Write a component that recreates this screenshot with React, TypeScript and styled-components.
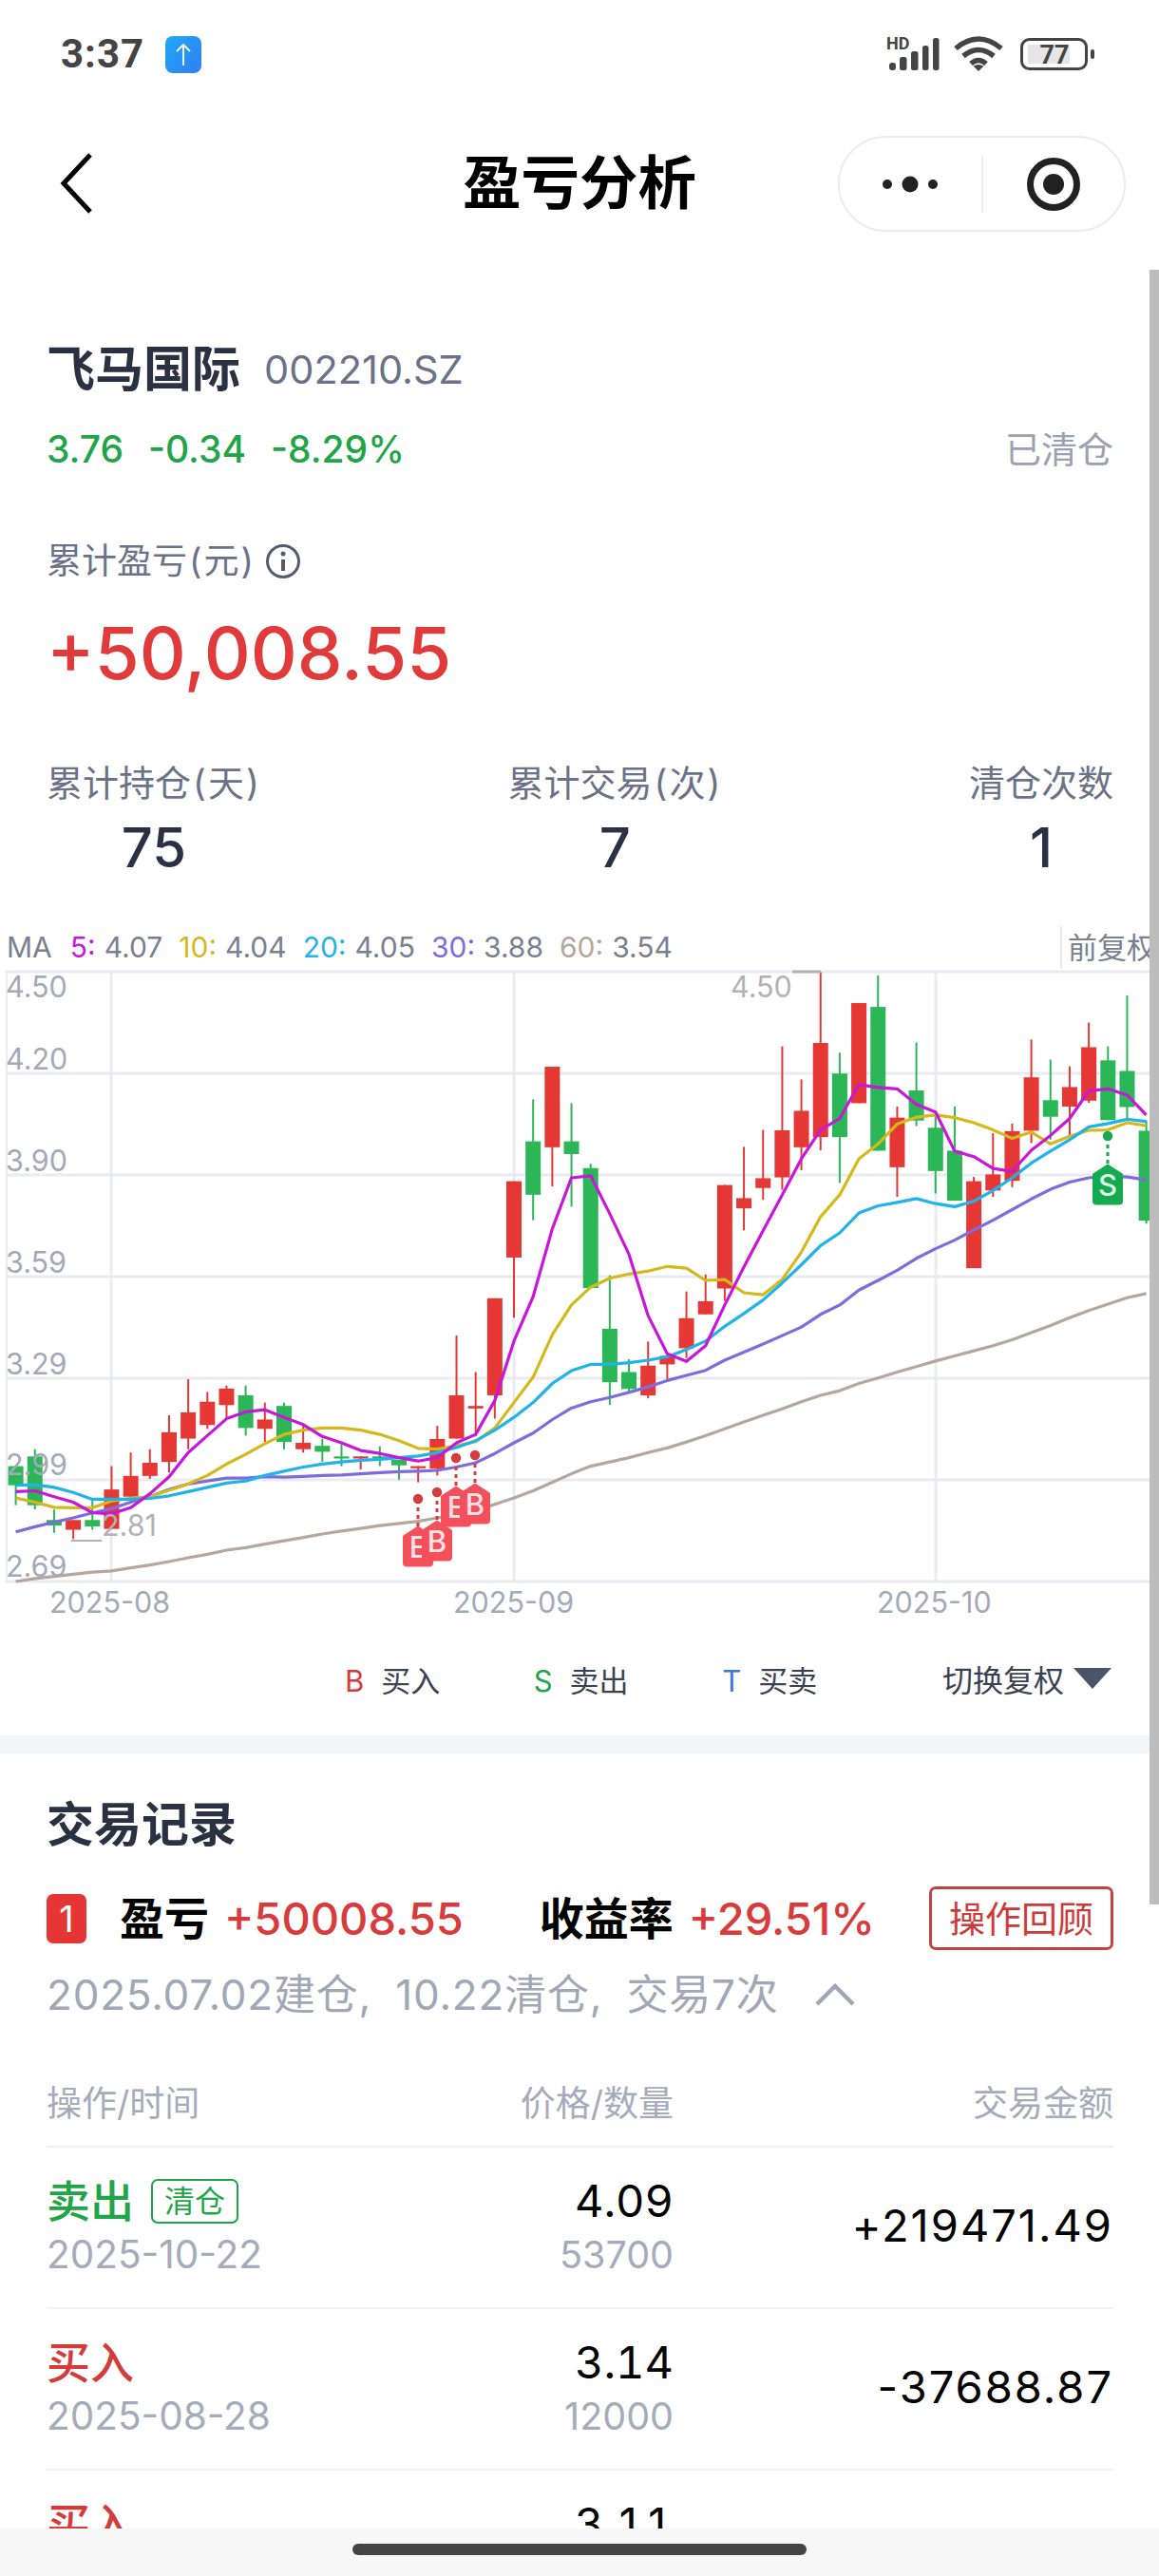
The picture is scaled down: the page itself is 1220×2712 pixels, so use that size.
import React from "react";
import styled, { createGlobalStyle } from "styled-components";

const FONT = 'Inter, "Noto Sans CJK SC", sans-serif';
const INK = "#2a3142";
const SUB = "#6b7287";
const MUTED = "#a3a9b8";
const RED = "#e03a3a";
const GREEN = "#1fa548";

const Global = createGlobalStyle`
  html, body { margin: 0; padding: 0; background: #fff; }
  body { font-family: ${FONT}; }
  * { box-sizing: border-box; }
`;

const Page = styled.div`
  position: relative;
  width: 1220px;
  height: 2712px;
  display: flex;
  flex-direction: column;
  overflow: hidden;
  background: #fff;
`;
const Scroll = styled.main`
  flex: 1;
  min-height: 0;
  overflow: hidden;
`;
const ScrollThumb = styled.div`
  position: absolute;
  right: 0;
  top: 284px;
  width: 10px;
  height: 1721px;
  background: #bcbcbc;
`;
const StatusBar = styled.div`
  height: 114px;
  display: flex;
  align-items: center;
  justify-content: space-between;
  padding: 0 68px 0 64px;
`;
const StatusLeft = styled.div`
  display: flex;
  align-items: center;
  gap: 22px;
`;
const Clock = styled.span`
  font: 700 42px/48px Roboto, sans-serif;
  letter-spacing: 1px;
  color: #444;
`;
const StatusRight = styled.div`
  display: flex;
  align-items: center;
  gap: 12px;
`;
const Nav = styled.header`
  position: relative;
  height: 158px;
  display: flex;
  align-items: center;
  justify-content: center;
`;
const BackIcon = styled.svg`
  position: absolute;
  left: 60px;
  top: 46px;
`;
const NavTitle = styled.h1`
  margin: 0;
  font: 700 61.5px/70px ${FONT};
  color: #000;
`;
const Capsule = styled.div`
  position: absolute;
  left: 882px;
  top: 29px;
  width: 303px;
  height: 101px;
  border: 2px solid #ececec;
  border-radius: 51px;
  display: flex;
  align-items: center;
`;
const CapsuleSide = styled.div`
  flex: 1;
  height: 60px;
  display: flex;
  align-items: center;
  justify-content: center;
`;
const CapsuleDivider = styled.div`
  width: 2px;
  height: 60px;
  background: #efefef;
`;

const Summary = styled.section`
  padding: 87px 48px 0 49px;
`;
const NameRow = styled.div`
  display: flex;
  align-items: center;
  gap: 25px;
  height: 60px;
`;
const StockName = styled.span`
  font: 600 51px/60px ${FONT};
  color: ${INK};
`;
const StockCode = styled.span`
  font: 400 41.5px/60px ${FONT};
  color: ${SUB};
`;
const QuoteRow = styled.div`
  margin-top: 29px;
  height: 50px;
  display: flex;
  align-items: center;
  gap: 26px;
`;
const Quote = styled.span`
  font: 500 39px/50px ${FONT};
  color: ${GREEN};
`;
const ClosedState = styled.span`
  margin-left: auto;
  font: 400 38px/50px ${FONT};
  color: #9aa1b0;
`;
const ProfitLabel = styled.div`
  margin-top: 71px;
  height: 44px;
  display: flex;
  align-items: center;
  gap: 10px;
  font: 400 37px/44px ${FONT};
  color: ${SUB};
`;
const LabelText = styled.span``;
const Paren = styled.span`
  padding: 0 2px;
`;
const ProfitValue = styled.div`
  margin-top: 29px;
  font: 500 76px/90px ${FONT};
  color: ${RED};
`;
const Stats = styled.div`
  margin-top: 67px;
  display: flex;
  justify-content: space-between;
`;
const Stat = styled.div`
  display: flex;
  flex-direction: column;
  align-items: center;
`;
const StatLabel = styled.span`
  font: 400 38px/50px ${FONT};
  color: ${SUB};
`;
const StatValue = styled.span`
  margin-top: 8px;
  font: 500 58px/70px ${FONT};
  color: ${INK};
`;

const MaRow = styled.div`
  margin-top: 48px;
  height: 45px;
  display: flex;
  align-items: center;
  padding-left: 7px;
  font: 400 30px/45px ${FONT};
  color: #79808f;
`;
const MaName = styled.span`
  margin-right: 19px;
`;
const MaItem = styled.span`
  margin-right: 17px;
`;
const MaKey = styled.span<{ $color: string }>`
  color: ${(p) => p.$color};
  margin-right: 9px;
`;
const AdjustTab = styled.div`
  margin-left: auto;
  height: 45px;
  width: 104px;
  padding-left: 6px;
  border-left: 2px solid #e8eaf0;
  font: 400 31px/45px ${FONT};
  white-space: nowrap;
  overflow: hidden;
`;
const ChartSvg = styled.svg`
  display: block;
  width: 1220px;
  height: 690px;
`;
const AxisText = styled.text`
  font: 400 30.5px ${FONT};
  fill: ${MUTED};
`;
const MarkText = styled.text`
  font: 400 30.5px ${FONT};
  fill: #b2b2b2;
`;
const TagText = styled.text`
  font: 500 31px ${FONT};
  text-anchor: middle;
`;

const Legend = styled.div`
  height: 117px;
  padding: 40px 50px 0 363px;
  display: flex;
  align-items: flex-start;
`;
const LegendItem = styled.div`
  width: 199px;
  display: flex;
  align-items: center;
  gap: 18px;
  height: 40px;
  font: 400 31px/40px ${FONT};
  color: #3a4152;
`;
const LegendKey = styled.span<{ $color: string }>`
  color: ${(p) => p.$color};
`;
const AdjustSwitch = styled.div`
  margin-left: 33px;
  display: flex;
  align-items: center;
  gap: 10px;
  height: 40px;
  font: 400 32px/40px ${FONT};
  color: #3a4152;
  white-space: nowrap;
`;
const Caret = styled.span`
  width: 0;
  height: 0;
  margin-bottom: 6px;
  border-left: 20px solid transparent;
  border-right: 20px solid transparent;
  border-top: 22px solid #4a5568;
`;
const Gap = styled.div`
  height: 19px;
  background: #f4f5f9;
`;
const Records = styled.section`
  padding: 45px 48px 0 49px;
`;
const RecordsTitle = styled.h2`
  margin: 0;
  font: 700 50px/60px ${FONT};
  color: ${INK};
`;
const RoundRow = styled.div`
  margin-top: 35px;
  height: 67px;
  display: flex;
  align-items: center;
`;
const RoundBadge = styled.span`
  width: 42px;
  height: 52px;
  margin-right: 35px;
  border-radius: 7px;
  background: #e53535;
  color: #fff;
  font: 400 38px/52px ${FONT};
  text-align: center;
`;
const RoundKey = styled.span<{ $gap?: number }>`
  font: 700 47px/60px ${FONT};
  color: #000;
  margin-left: ${(p) => p.$gap ?? 0}px;
  margin-right: 16px;
`;
const RoundValue = styled.span`
  font: 500 47px/60px ${FONT};
  color: #d83b3b;
`;
const ReviewButton = styled.button`
  margin-left: auto;
  width: 194px;
  height: 67px;
  padding: 0;
  border: 3px solid #c9403f;
  border-radius: 7px;
  background: #fff;
  color: #cc3b3b;
  font: 400 38px/60px ${FONT};
`;
const RoundMeta = styled.div`
  margin-top: 22px;
  height: 50px;
  display: flex;
  align-items: center;
  gap: 38px;
  font: 400 44px/50px ${FONT};
  word-spacing: 12px;
  letter-spacing: 0.8px;
  color: #a0a7b6;
  white-space: nowrap;
`;
const TableGrid = styled.div`
  display: grid;
  grid-template-columns: 342px 318px 1fr;
`;
const TableHead = styled(TableGrid)`
  margin-top: 68px;
  padding-bottom: 22px;
  border-bottom: 2px solid #eeeff2;
  font: 400 37px/44px ${FONT};
  color: #a4abbb;
`;
const Cell = styled.div<{ $right?: boolean }>`
  text-align: ${(p) => (p.$right ? "right" : "left")};
`;
const Row = styled(TableGrid)`
  height: 170px;
  padding-bottom: 4px;
  align-items: center;
  border-bottom: 2px solid #f1f2f4;
`;
const OpLine = styled.div`
  display: flex;
  align-items: center;
  gap: 18px;
  height: 56px;
`;
const OpName = styled.span<{ $color: string }>`
  font: 500 46px/56px ${FONT};
  color: ${(p) => p.$color};
`;
const ClearTag = styled.span`
  width: 92px;
  height: 47px;
  border: 2px solid ${GREEN};
  border-radius: 7px;
  color: ${GREEN};
  text-align: center;
  font: 400 32px/43px ${FONT};
`;
const SubText = styled.div<{ $size: number }>`
  margin-top: 6px;
  font: 400 ${(p) => p.$size}px/46px ${FONT};
  color: #a4abbb;
`;
const Price = styled.div`
  font: 400 47px/56px ${FONT};
  font-variant-numeric: tabular-nums;
  color: #000;
`;
const Amount = styled.div`
  font: 400 47px/56px ${FONT};
  letter-spacing: 2px;
  color: #000;
  text-align: right;
`;
const BottomBar = styled.footer`
  height: 50px;
  flex: none;
  background: #f7f7f7;
  display: flex;
  justify-content: center;
  padding-top: 16px;
`;
const HomePill = styled.div`
  width: 478px;
  height: 12px;
  border-radius: 6px;
  background: #444;
`;

// Candle values are read off the 2.24x vertical scale of the chart.
type Candle = ["r" | "g", number, number, number, number];
const CANDLES: Candle[] = [
  ["g",1240,1285,1240,1332],["g",1217,1332,1200,1342],["g",1367,1380,1342,1397],["r",1367,1390,1367,1412],
  ["g",1367,1382,1320,1390],["r",1295,1388,1240,1388],["r",1263,1312,1208,1312],["r",1232,1263,1200,1270],
  ["r",1160,1230,1120,1255],["r",1113,1175,1035,1200],["r",1088,1143,1065,1152],["r",1057,1096,1050,1128],
  ["g",1073,1150,1050,1168],["r",1130,1152,1090,1183],["g",1098,1183,1090,1200],["r",1185,1200,1145,1208],
  ["g",1192,1206,1175,1230],["g",1217,1222,1188,1240],["r",1217,1222,1217,1248],["g",1217,1221,1193,1240],
  ["g",1225,1238,1225,1272],["r",1240,1245,1240,1278],["r",1176,1246,1145,1262],["r",1073,1175,932,1175],
  ["r",1098,1104,1018,1170],["r",844,1073,844,1128],["r",568,748,568,890],["g",474,600,375,660],
  ["r",298,488,298,580],["g",474,504,384,628],["g",537,820,527,820],["g",916,1042,790,1096],
  ["g",1018,1058,988,1065],["r",1003,1073,946,1080],["r",980,1000,975,1035],["r",891,962,828,985],
  ["r",851,882,788,882],["r",577,821,577,850],["r",608,632,487,684],["r",561,584,447,612],
  ["r",448,559,250,588],["r",402,488,328,542],["r",242,464,75,495],["g",314,464,265,572],
  ["r",148,384,148,384],["g",157,496,83,496],["r",418,535,392,605],["g",354,425,241,438],
  ["g",442,544,410,597],["g",496,614,392,614],["r",568,773,558,773],["r",552,590,455,605],
  ["r",450,567,432,582],["r",323,449,234,478],["g",377,416,281,470],["r",346,392,297,460],
  ["r",252,378,194,383],["g",283,424,250,424],["g",308,393,130,420],["g",449,661,425,668],
];

const MA_LINES: { color: string; pts: number[] }[] = [
  { color: "#b5a69e", pts: [1512,1505,1500,1495,1490,1487,1480,1473,1465,1456,1448,1438,1432,1424,1416,1408,1400,1393,1387,1380,1375,1370,1362,1355,1345,1330,1315,1298,1278,1258,1240,1230,1220,1208,1197,1183,1168,1152,1136,1120,1105,1088,1073,1062,1045,1032,1018,1005,992,980,968,956,942,925,908,890,873,858,843,833] },
  { color: "#7e6cdc", pts: [1395,1383,1372,1362,1350,1340,1325,1312,1295,1282,1275,1268,1268,1265,1266,1264,1262,1261,1258,1255,1253,1252,1250,1242,1232,1210,1185,1162,1130,1103,1088,1078,1066,1053,1038,1026,1014,990,971,952,932,912,882,860,825,802,778,750,727,707,683,660,635,610,587,570,560,556,558,565] },
  { color: "#d4b91c", pts: [1315,1325,1337,1338,1338,1322,1316,1312,1297,1282,1262,1235,1212,1187,1165,1155,1150,1150,1155,1165,1180,1198,1200,1192,1182,1150,1090,1030,930,860,818,797,787,780,769,773,802,800,831,836,800,735,652,600,515,480,433,417,412,418,430,447,467,452,480,462,448,447,430,437] },
  { color: "#1fb3e8", pts: [1285,1284,1290,1302,1318,1318,1318,1316,1310,1300,1290,1280,1275,1262,1252,1242,1235,1230,1226,1224,1220,1216,1208,1196,1180,1155,1125,1090,1045,1015,1000,1000,996,990,982,965,945,910,880,848,808,765,720,690,643,626,618,609,621,628,615,590,560,525,497,470,440,432,422,427] },
  { color: "#c817d8", pts: [1300,1298,1312,1325,1350,1352,1338,1305,1265,1208,1168,1128,1112,1107,1125,1142,1170,1185,1203,1210,1220,1228,1220,1185,1165,1085,945,840,680,560,555,645,740,885,975,993,956,860,770,685,600,515,447,420,340,347,350,387,405,497,510,538,545,495,460,420,355,350,365,412] },
];

const X = (i: number) => 16.6 + i * 20.17;
const Y = (z: number) => 990 + z / 2.24;

const GRID_Y = [1023, 1130, 1237, 1344, 1451, 1558, 1665];
const GRID_X = [117, 541, 985];
const Y_LABELS: [string, number][] = [
  ["4.50", 1039], ["4.20", 1115], ["3.90", 1222], ["3.59", 1329], ["3.29", 1436], ["2.99", 1542], ["2.69", 1649],
];
const X_LABELS: [string, number][] = [["2025-08", 52], ["2025-09", 477], ["2025-10", 923]];

function housePath(cx: number, top: number) {
  const w = 15.5;
  const h = 42;
  return `M${cx} ${top}L${cx + w} ${top + 10}V${top + h - 3}Q${cx + w} ${top + h} ${cx + w - 3} ${top + h}H${cx - w + 3}Q${cx - w} ${top + h} ${cx - w} ${top + h - 3}V${top + 10}Z`;
}

function TradeMark(p: { cx: number; dot: number; top: number; label: string; fill: string; ink: string; line: string }) {
  return (
    <g>
      <circle cx={p.cx} cy={p.dot} r={5.2} fill={p.line} />
      <line x1={p.cx} y1={p.dot + 9} x2={p.cx} y2={p.top} stroke={p.line} strokeWidth={3} strokeDasharray="4 4" />
      <path d={housePath(p.cx, p.top)} fill={p.fill} stroke={p.fill} strokeWidth={1} />
      <TagText x={p.cx} y={p.top + 33} fill={p.ink}>{p.label}</TagText>
    </g>
  );
}

function Chart() {
  return (
    <ChartSvg viewBox="0 1020 1220 690">
      {GRID_Y.map((y) => (
        <line key={y} x1={6} x2={1210} y1={y} y2={y} stroke="#e9ebf1" strokeWidth={3} />
      ))}
      <line x1={7} x2={7} y1={1023} y2={1665} stroke="#e9ebf1" strokeWidth={2} />
      {GRID_X.map((x) => (
        <line key={x} x1={x} x2={x} y1={1023} y2={1665} stroke="#e9ebf1" strokeWidth={3} />
      ))}
      {CANDLES.map((c, i) => {
        const color = c[0] === "r" ? "#e53835" : "#2bb657";
        const x = X(i);
        return (
          <g key={i}>
            <line x1={x} x2={x} y1={Y(c[3])} y2={Y(c[4])} stroke={color} strokeWidth={2} />
            <rect x={x - 8} y={Y(c[1])} width={16} height={Math.max(Y(c[2]) - Y(c[1]), 2)} fill={color} />
          </g>
        );
      })}
      {MA_LINES.map((l) => (
        <polyline
          key={l.color}
          points={l.pts.map((z, i) => `${X(i).toFixed(1)},${Y(z).toFixed(1)}`).join(" ")}
          fill="none"
          stroke={l.color}
          strokeWidth={3.2}
          strokeLinejoin="round"
        />
      ))}
      {Y_LABELS.map(([t, y]) => (
        <AxisText key={t} x={6} y={y + 11}>{t}</AxisText>
      ))}
      {X_LABELS.map(([t, x]) => (
        <AxisText key={t} x={x} y={1698}>{t}</AxisText>
      ))}
      <MarkText x={769} y={1050}>4.50</MarkText>
      <line x1={834} x2={864} y1={1023} y2={1023} stroke="#b2b2b2" strokeWidth={3} />
      <MarkText x={107} y={1617}>2.81</MarkText>
      <line x1={75} x2={107} y1={1622} y2={1622} stroke="#b2b2b2" strokeWidth={2} />
      <TradeMark cx={440} dot={1578} top={1607} label="E" fill="#f4505c" ink="#fde3e5" line="#d63c3c" />
      <TradeMark cx={460} dot={1571} top={1601} label="B" fill="#f4505c" ink="#fde3e5" line="#d63c3c" />
      <TradeMark cx={480} dot={1535} top={1565} label="E" fill="#f4505c" ink="#fde3e5" line="#d63c3c" />
      <TradeMark cx={500} dot={1532} top={1562} label="B" fill="#f4505c" ink="#fde3e5" line="#d63c3c" />
      <TradeMark cx={1166} dot={1196} top={1226} label="S" fill="#13aa50" ink="#dff5e6" line="#13aa50" />
    </ChartSvg>
  );
}

const UploadIcon = () => (
  <svg width="38" height="39" viewBox="0 0 38 39">
    <defs>
      <linearGradient id="up" x1="0" y1="0" x2="1" y2="1">
        <stop offset="0" stopColor="#22a7f5" />
        <stop offset="1" stopColor="#2f7ff5" />
      </linearGradient>
    </defs>
    <rect width="38" height="39" rx="8" fill="url(#up)" />
    <path d="M19 31V9M12 16l7-7 7 7" fill="none" stroke="#fff" strokeWidth="1.8" />
  </svg>
);

const SignalIcon = () => (
  <svg width="58" height="36" viewBox="0 0 58 36">
    <text x="0" y="13" fontFamily="Roboto, sans-serif" fontWeight="700" fontSize="18" fill="#444">HD</text>
    <g fill="#444">
      <rect x="3" y="27" width="7" height="8" rx="3" />
      <rect x="14" y="21" width="7.5" height="14" rx="2.5" />
      <rect x="26" y="15" width="7.5" height="20" rx="2.5" />
      <rect x="38" y="9" width="6.5" height="26" rx="2.5" />
      <rect x="49" y="1" width="6.5" height="34" rx="2.5" />
    </g>
  </svg>
);

const WifiIcon = () => (
  <svg width="59" height="38" viewBox="0 0 59 38" fill="none" stroke="#444" strokeWidth="5.5">
    <path d="M3 13Q27 -7 51 13" />
    <path d="M11 21Q27 8 43 21" />
    <path d="M19 29Q27 22 35 29" />
    <path d="M27 37l-5.5-5.5q5.5-3 11 0z" fill="#444" stroke="none" />
  </svg>
);

const BatteryIcon = () => (
  <svg width="78" height="34" viewBox="0 0 78 34">
    <rect x="1.5" y="1.5" width="68" height="31" rx="8" fill="none" stroke="#444" strokeWidth="3" />
    <rect x="8" y="7" width="44" height="20" fill="#e6e6e6" />
    <text x="36" y="27" textAnchor="middle" fontFamily="Roboto, sans-serif" fontWeight="700" fontSize="27" fill="#444">77</text>
    <rect x="74" y="12" width="4" height="10" rx="2" fill="#444" />
  </svg>
);

const InfoIcon = () => (
  <svg width="38" height="38" viewBox="0 0 38 38" fill="none" stroke="#555c6e">
    <circle cx="19" cy="19" r="16.5" strokeWidth="3" />
    <circle cx="19" cy="11" r="2.5" fill="#555c6e" stroke="none" />
    <path d="M19 17v12" strokeWidth="4" />
  </svg>
);

const MA_ITEMS: [string, string, string][] = [
  ["5:", "4.07", "#c817d8"],
  ["10:", "4.04", "#d4b91c"],
  ["20:", "4.05", "#1fb3e8"],
  ["30:", "3.88", "#7e6cdc"],
  ["60:", "3.54", "#b5a69e"],
];

const TRADES = [
  { op: "卖出", color: GREEN, clear: true, date: "2025-10-22", price: "4.09", qty: "53700", amount: "+219471.49" },
  { op: "买入", color: "#d43c3c", clear: false, date: "2025-08-28", price: "3.14", qty: "12000", amount: "-37688.87" },
  { op: "买入", color: "#d43c3c", clear: false, date: "2025-08-27", price: "3.11", qty: "12000", amount: "-37328.60" },
];

export default function App() {
  return (
    <Page>
      <Global />
      <StatusBar>
        <StatusLeft>
          <Clock>3:37</Clock>
          <UploadIcon />
        </StatusLeft>
        <StatusRight>
          <SignalIcon />
          <WifiIcon />
          <BatteryIcon />
        </StatusRight>
      </StatusBar>
      <Nav>
        <BackIcon width="40" height="66" viewBox="0 0 40 66" fill="none" stroke="#000" strokeWidth="5">
          <path d="M35 3L7 33l28 30" />
        </BackIcon>
        <NavTitle>盈亏分析</NavTitle>
        <Capsule>
          <CapsuleSide>
            <svg width="60" height="24" viewBox="0 0 60 24" fill="#222">
              <circle cx="6" cy="12" r="5" />
              <circle cx="30" cy="12" r="8.5" />
              <circle cx="54" cy="12" r="5" />
            </svg>
          </CapsuleSide>
          <CapsuleDivider />
          <CapsuleSide>
            <svg width="60" height="60" viewBox="0 0 60 60">
              <circle cx="30" cy="30" r="24.5" fill="none" stroke="#222" strokeWidth="7" />
              <circle cx="30" cy="30" r="11" fill="#222" />
            </svg>
          </CapsuleSide>
        </Capsule>
      </Nav>
      <Scroll>
        <Summary>
          <NameRow>
            <StockName>飞马国际</StockName>
            <StockCode>002210.SZ</StockCode>
          </NameRow>
          <QuoteRow>
            <Quote>3.76</Quote>
            <Quote>-0.34</Quote>
            <Quote>-8.29%</Quote>
            <ClosedState>已清仓</ClosedState>
          </QuoteRow>
          <ProfitLabel>
            <LabelText>累计盈亏<Paren>(</Paren>元<Paren>)</Paren></LabelText>
            <InfoIcon />
          </ProfitLabel>
          <ProfitValue>+50,008.55</ProfitValue>
          <Stats>
            <Stat>
              <StatLabel>累计持仓<Paren>(</Paren>天<Paren>)</Paren></StatLabel>
              <StatValue>75</StatValue>
            </Stat>
            <Stat>
              <StatLabel>累计交易<Paren>(</Paren>次<Paren>)</Paren></StatLabel>
              <StatValue>7</StatValue>
            </Stat>
            <Stat>
              <StatLabel>清仓次数</StatLabel>
              <StatValue>1</StatValue>
            </Stat>
          </Stats>
        </Summary>
        <MaRow>
          <MaName>MA</MaName>
          {MA_ITEMS.map(([k, v, c]) => (
            <MaItem key={k}>
              <MaKey $color={c}>{k}</MaKey>
              {v}
            </MaItem>
          ))}
          <AdjustTab>前复权</AdjustTab>
        </MaRow>
        <Chart />
        <Legend>
          <LegendItem>
            <LegendKey $color="#d43c3c">B</LegendKey>买入
          </LegendItem>
          <LegendItem>
            <LegendKey $color="#1fa548">S</LegendKey>卖出
          </LegendItem>
          <LegendItem>
            <LegendKey $color="#3b78d8">T</LegendKey>买卖
          </LegendItem>
          <AdjustSwitch>
            切换复权
            <Caret />
          </AdjustSwitch>
        </Legend>
        <Gap />
        <Records>
          <RecordsTitle>交易记录</RecordsTitle>
          <RoundRow>
            <RoundBadge>1</RoundBadge>
            <RoundKey>盈亏</RoundKey>
            <RoundValue>+50008.55</RoundValue>
            <RoundKey $gap={80}>收益率</RoundKey>
            <RoundValue>+29.51%</RoundValue>
            <ReviewButton>操作回顾</ReviewButton>
          </RoundRow>
          <RoundMeta>
            2025.07.02建仓, 10.22清仓, 交易7次
            <svg width="44" height="24" viewBox="0 0 44 24" fill="none" stroke="#a0a7b6" strokeWidth="4.5">
              <path d="M3 22L22 3l19 19" />
            </svg>
          </RoundMeta>
          <TableHead>
            <Cell>操作/时间</Cell>
            <Cell $right>价格/数量</Cell>
            <Cell $right>交易金额</Cell>
          </TableHead>
          {TRADES.map((t) => (
            <Row key={t.date}>
              <Cell>
                <OpLine>
                  <OpName $color={t.color}>{t.op}</OpName>
                  {t.clear && <ClearTag>清仓</ClearTag>}
                </OpLine>
                <SubText $size={40.5}>{t.date}</SubText>
              </Cell>
              <Cell $right>
                <Price>{t.price}</Price>
                <SubText $size={39.5}>{t.qty}</SubText>
              </Cell>
              <Amount>{t.amount}</Amount>
            </Row>
          ))}
        </Records>
      </Scroll>
      <BottomBar>
        <HomePill />
      </BottomBar>
      <ScrollThumb />
    </Page>
  );
}
